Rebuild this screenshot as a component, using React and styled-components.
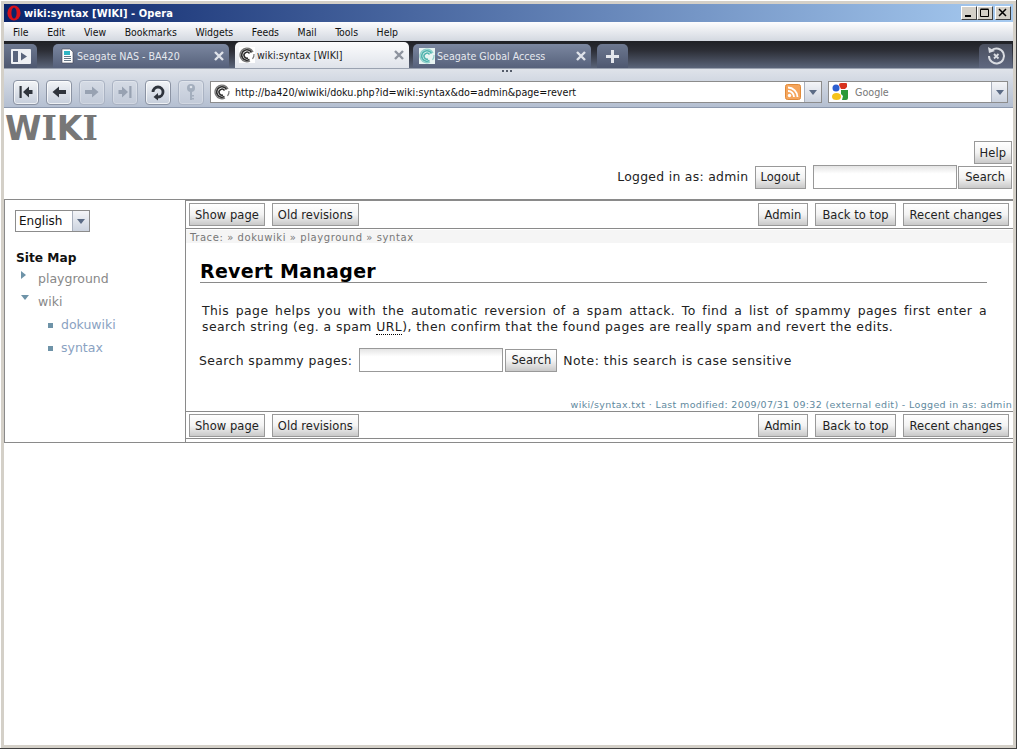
import styled, { createGlobalStyle } from "styled-components"

const Global = createGlobalStyle`
  html, body { margin: 0; padding: 0; background: #fff; }
  * { box-sizing: border-box; }
`

const ui = `"DejaVu Sans", Verdana, sans-serif`

const Window = styled.div`
  width: 1017px;
  height: 749px;
  padding: 4px;
  background: #d4d0c8;
  box-shadow: inset -1px -1px 0 #404040, inset 1px 1px 0 #fff;
  display: flex;
  flex-direction: column;
  overflow: hidden;
`

const TitleBar = styled.div`
  height: 18px;
  flex: none;
  display: flex;
  align-items: center;
  padding: 0 2px 0 3px;
  background: linear-gradient(to right, #0a246a, #a6caf0);
  color: #fff;
  font: bold 11px ${ui};
  font-stretch: condensed;
  letter-spacing: 0.08px;
`

const TitleText = styled.span`
  margin-left: 3px;
  flex: 1;
`

const WinButton = styled.button`
  width: 16px;
  height: 14px;
  padding: 0;
  margin-left: ${p => (p.$gap ? 2 : 0)}px;
  background: #d4d0c8;
  border: 1px solid;
  border-color: #fff #404040 #404040 #fff;
  display: flex;
  align-items: center;
  justify-content: center;
`

const MenuBar = styled.div`
  height: 19px;
  flex: none;
  display: flex;
  align-items: center;
  padding-left: 9px;
  gap: 18.6px;
  background: linear-gradient(to bottom, #fdfdfe, #d3d8e0);
  color: #111;
  font: 10.4px ${ui};
  font-stretch: condensed;
`

const TabBar = styled.div`
  height: 27px;
  flex: none;
  display: flex;
  align-items: flex-end;
  padding-right: 1px;
  background: linear-gradient(to bottom, #1f2025 0%, #2c2e36 35%, #5a6479 100%);
  font: 10.6px ${ui};
  font-stretch: condensed;
`

const SidePanelToggle = styled.div`
  width: 33px;
  height: 24px;
  margin-right: 16px;
  background: linear-gradient(to bottom, #6d7890, #4e5870);
  border-radius: 0 5px 0 0;
  display: flex;
  align-items: center;
  justify-content: center;
`

const Tab = styled.div`
  width: ${p => p.$w}px;
  height: ${p => (p.$active ? 26 : 24)}px;
  margin-right: ${p => p.$mr}px;
  display: flex;
  align-items: center;
  gap: 2px;
  padding: 0 5px 0 ${p => (p.$active ? 4 : 6)}px;
  border-radius: 5px 5px 0 0;
  color: ${p => (p.$active ? "#222" : "#e6e9ef")};
  background: ${p =>
    p.$active
      ? "linear-gradient(to bottom, #fcfcfd, #dfe3ea)"
      : "linear-gradient(to bottom, #7b87a0, #56617b)"};
`

const TabLabel = styled.span`
  flex: 1;
  white-space: nowrap;
`

const NewTab = styled.div`
  width: 31px;
  height: 24px;
  background: linear-gradient(to bottom, #6d7890, #4e5870);
  border-radius: 5px 5px 0 0;
  display: flex;
  align-items: center;
  justify-content: center;
`

const ClosedTabs = styled.div`
  width: 33px;
  height: 24px;
  margin-left: auto;
  background: linear-gradient(to bottom, #4a4f5e, #5f6880);
  border-radius: 5px 0 0 0;
  display: flex;
  align-items: center;
  justify-content: center;
`

const NavBar = styled.div`
  height: 40px;
  flex: none;
  position: relative;
  display: flex;
  align-items: center;
  padding: 8px 5px 0 9px;
  background: linear-gradient(to bottom, #dfe3ea, #b4bfd1);
  border-bottom: 1px solid #8d99ae;
  border-top: 1px solid #9aa2b0;
`

const GripDots = styled.div`
  position: absolute;
  top: 1px;
  left: 498px;
  display: flex;
  gap: 2px;
  & > i {
    width: 2px;
    height: 2px;
    background: #555c6a;
  }
`

const NavButton = styled.div`
  width: 26px;
  height: 25px;
  margin-right: 7px;
  border: 1px solid ${p => (p.$off ? "#aab3c3" : "#8b93a3")};
  border-radius: 4px;
  background: ${p =>
    p.$off
      ? "linear-gradient(to bottom, #d5dbe5, #c2cad8)"
      : "linear-gradient(to bottom, #f2f4f7, #c6cedb)"};
  box-shadow: inset 0 0 0 1px rgba(255, 255, 255, ${p => (p.$off ? 0.25 : 0.7)});
  display: flex;
  align-items: center;
  justify-content: center;
`

const AddressBox = styled.div`
  width: 612px;
  height: 22px;
  margin-left: -1px;
  display: flex;
  align-items: center;
  padding-left: 3px;
  background: #fff;
  border: 1px solid #8c8c8c;
  font: 10.65px ${ui};
  font-stretch: condensed;
  color: #111;
`

const AddressText = styled.span`
  flex: 1;
  margin-left: 5px;
  white-space: nowrap;
`

const DropArrow = styled.div`
  width: ${p => p.$w || 17}px;
  align-self: stretch;
  background: linear-gradient(to bottom, #f4f5f8, #ccd3df);
  border-left: 1px solid #a9b0bd;
  display: flex;
  align-items: center;
  justify-content: center;
  flex: none;
  margin-left: 3px;
  &::after {
    content: "";
    border: 4px solid transparent;
    border-top: 5px solid #5b6b85;
    border-bottom: 0;
  }
`

const SearchBox = styled(AddressBox)`
  width: 180px;
  margin-left: 6px;
  color: #777;
`

const SearchLabel = styled.span`
  flex: 1;
  margin-left: 6px;
`

const Page = styled.div`
  flex: 1;
  min-height: 0;
  background: #fff;
  font: 12.4px ${ui};
  color: #222;
  letter-spacing: 0.3px;
`

const Masthead = styled.header`
  height: 91px;
  display: flex;
  flex-direction: column;
  align-items: stretch;
`

const Logo = styled.h1`
  margin: 3px 0 0 1px;
  height: 30px;
  font: bold 33px/35px ${ui};
  letter-spacing: 0;
  color: #777;
`

const SerifLetter = styled.span`
  font-family: "DejaVu Serif", serif;
`

const HelpRow = styled.div`
  display: flex;
  justify-content: flex-end;
  padding-right: 1px;
`

const UserRow = styled.div`
  display: flex;
  justify-content: flex-end;
  align-items: center;
  padding-right: 1px;
  margin-top: 1px;
`

const UserText = styled.span`
  margin: -2px 6px 0 0;
`

const Button = styled.button`
  height: 23px;
  padding: 0 ${p => (p.$wide ? 6 : 5)}px;
  margin-left: ${p => p.$ml || 0}px;
  border: 1px solid #999;
  background: linear-gradient(to bottom, #fff 0%, #f3f3f3 50%, #c9c9c9 100%);
  color: #222;
  font: 11.5px ${ui};
  letter-spacing: 0.05px;
  white-space: nowrap;
`

const TextInput = styled.input`
  width: 144px;
  height: 24px;
  margin-left: ${p => p.$ml || 0}px;
  padding: 0;
  border: 1px solid #999;
  background: linear-gradient(to bottom, #e4e4e4, #fff 35%);
`

const Frame = styled.div`
  height: 244px;
  display: flex;
  border-top: 1px solid #8a8a8a;
  border-bottom: 1px solid #8a8a8a;
  border-left: 1px solid #8a8a8a;
`

const Sidebar = styled.aside`
  width: 181px;
  flex: none;
  padding: 10px 10px 0 10px;
  border-right: 1px solid #8a8a8a;
`

const LangSelect = styled.div`
  width: 75px;
  height: 22px;
  display: flex;
  align-items: center;
  padding-left: 3px;
  border: 1px solid #8c8c8c;
  color: #111;
  font-size: 12px;
  letter-spacing: 0;
`

const LangLabel = styled.span`
  flex: 1;
`

const SiteMapTitle = styled.h2`
  margin: 18px 0 0 1px;
  font: bold 12.2px/16px ${ui};
  letter-spacing: 0;
  color: #111;
`

const Tree = styled.ul`
  list-style: none;
  margin: 0;
  padding: 0 0 0 ${p => p.$indent}px;
`

const TreeItem = styled.li`
  height: ${p => p.$h}px;
  padding-top: ${p => p.$top || 0}px;
  display: flex;
  align-items: center;
  gap: ${p => p.$gap}px;
  color: ${p => (p.$leaf ? "#8aa2c2" : "#888")};
  letter-spacing: 0;
  font-size: 12.5px;
`

const Marker = styled.i`
  width: 5px;
  height: 5px;
  flex: none;
  ${p => p.$kind === "leaf" && "background: #6e93a8; margin-top: 2px;"}
  ${p =>
    p.$kind === "closed" &&
    "width: 0; height: 0; border: 4px solid transparent; border-left: 5px solid #6e93a8; border-right: 0; margin-top: -7px;"}
  ${p =>
    p.$kind === "open" &&
    "width: 0; height: 0; border: 4px solid transparent; border-top: 5px solid #6e93a8; border-bottom: 0; margin-top: -7px;"}
`

const Main = styled.main`
  flex: 1;
  min-width: 0;
  border-top: 1px solid #8a8a8a;
  display: flex;
  flex-direction: column;
`

const ActionBar = styled.div`
  height: ${p => p.$h}px;
  flex: none;
  display: flex;
  align-items: center;
  gap: 7px;
  padding: 1px 4px 0 3px;
`

const Spacer = styled.div`
  flex: 1;
`

const Trace = styled.div`
  height: 15px;
  margin-top: 1px;
  padding-left: 4px;
  border-top: 1px solid #8a8a8a;
  font: 10px/17px ${ui};
  letter-spacing: 0.58px;
  color: #777;
  background: linear-gradient(to bottom, #fff 0 1px, #f5f5f5 1px);
`

const Content = styled.div`
  flex: 1;
  padding: 16px 26px 0 14px;
  letter-spacing: 0.4px;
`

const Heading = styled.h1`
  margin: 0;
  height: 24px;
  font: bold 19px/24px ${ui};
  letter-spacing: 0.3px;
  color: #000;
  border-bottom: 1px solid #8a8a8a;
`

const Paragraph = styled.p`
  margin: 20px 0 0 2px;
  line-height: 16px;
  text-align: justify;
  letter-spacing: 0.46px;
`

const Abbr = styled.abbr`
  text-decoration: none;
  border-bottom: 1px dotted #000;
`

const SearchForm = styled.div`
  display: flex;
  align-items: center;
  margin: 13px 0 0 -1px;
`

const SearchNote = styled.span`
  margin-left: 6px;
  letter-spacing: 0.52px;
`

const Meta = styled.div`
  text-align: right;
  padding-right: 1px;
  font: 9.5px/13px ${ui};
  letter-spacing: 0.35px;
  color: #5f8aa0;
  border-bottom: 1px solid #8a8a8a;
`

const BottomRule = styled.div`
  flex: none;
  height: 4px;
  border-top: 1px solid #8a8a8a;
`

// Site favicon: a dark broken ring around a smaller swirl
function DokuIcon({ tint = "#2b2b2b", soft = "#777", bg = "#fff" }) {
  return (
    <svg width="16" height="16" viewBox="0 0 16 16">
      <rect width="16" height="16" fill={bg} />
      <g fill="none">
        <path d="M14 5A6.800 6.800 0 1 0 11 14" stroke={soft} strokeWidth="1.400" />
        <path d="M12.500 5.500A5.200 5.200 0 1 0 10.500 12.500" stroke={tint} strokeWidth="1.600" />
        <path d="M10.500 6.500A3 3 0 1 0 9 11" stroke={tint} strokeWidth="1.500" />
        <path d="M15 7A7 7 0 0 1 13.500 12" stroke={soft} strokeWidth="1.200" />
      </g>
    </svg>
  )
}

function CloseX({ color }) {
  return (
    <svg width="10" height="10" viewBox="0 0 10 10">
      <path d="M1 1l8 8M9 1l-8 8" stroke={color} strokeWidth="2.400" fill="none" />
    </svg>
  )
}

function NavIcon({ d, fill }) {
  return (
    <svg width="18" height="16" viewBox="0 0 18 16">
      <path d={d} fill={fill} />
    </svg>
  )
}

const navDark = "#2f343c"
const navOff = "#98a2b2"

function ActionButtons({ h }) {
  return (
    <ActionBar $h={h}>
      <Button>Show page</Button>
      <Button>Old revisions</Button>
      <Spacer />
      <Button $wide>Admin</Button>
      <Button $wide>Back to top</Button>
      <Button $wide>Recent changes</Button>
    </ActionBar>
  )
}

export default function App() {
  const menus = ["File", "Edit", "View", "Bookmarks", "Widgets", "Feeds", "Mail", "Tools", "Help"]

  return (
    <Window>
      <Global />
      <TitleBar>
        <svg width="14" height="16" viewBox="0 0 14 16">
          <ellipse cx="7" cy="8" rx="6.600" ry="7.600" fill="#d8121a" />
          <ellipse cx="7" cy="8" rx="2.600" ry="5.600" fill="#0a246a" />
        </svg>
        <TitleText>wiki:syntax [WIKI] - Opera</TitleText>
        <WinButton>
          <svg width="10" height="10" viewBox="0 0 10 10"><rect x="1" y="7" width="6" height="2" fill="#000" /></svg>
        </WinButton>
        <WinButton>
          <svg width="10" height="10" viewBox="0 0 10 10"><path d="M0.500 1.500h8v7h-8z M0.500 1h8" fill="none" stroke="#000" /></svg>
        </WinButton>
        <WinButton $gap>
          <svg width="10" height="10" viewBox="0 0 10 10"><path d="M1 1l7 7M8 1l-7 7" stroke="#000" strokeWidth="1.500" /></svg>
        </WinButton>
      </TitleBar>

      <MenuBar>
        {menus.map(m => <span key={m}>{m}</span>)}
      </MenuBar>

      <TabBar>
        <SidePanelToggle>
          <svg width="20" height="15" viewBox="0 0 20 15">
            <rect width="20" height="15" rx="1" fill="#eef0f4" />
            <rect x="2" y="2" width="5" height="11" fill="#59647c" />
            <path d="M10 3.500l6 4-6 4z" fill="#59647c" />
          </svg>
        </SidePanelToggle>
        <Tab $w={176} $mr={6}>
          <svg width="16" height="16" viewBox="0 0 16 16">
            <path d="M3 1h8l3 3v11H3z" fill="#fff" stroke="#445" strokeWidth="0.600" />
            <rect x="5" y="3" width="6" height="4" fill="#31b5c4" />
            <rect x="5" y="8" width="7" height="1" fill="#678" />
            <rect x="5" y="10" width="7" height="1" fill="#678" />
            <rect x="5" y="12" width="7" height="1" fill="#678" />
          </svg>
          <TabLabel>Seagate NAS - BA420</TabLabel>
          <CloseX color="#dfe3ea" />
        </Tab>
        <Tab $w={174} $mr={4} $active>
          <DokuIcon />
          <TabLabel>wiki:syntax [WIKI]</TabLabel>
          <CloseX color="#8d939e" />
        </Tab>
        <Tab $w={178} $mr={6}>
          <DokuIcon tint="#4fb3ad" soft="#8fd0cb" bg="#e8f4f2" />
          <TabLabel>Seagate Global Access</TabLabel>
          <CloseX color="#dfe3ea" />
        </Tab>
        <NewTab>
          <svg width="13" height="13" viewBox="0 0 13 13">
            <path d="M5 0h3v5h5v3H8v5H5V8H0V5h5z" fill="#e3e6ec" />
          </svg>
        </NewTab>
        <ClosedTabs>
          <svg width="20" height="20" viewBox="0 0 20 20" fill="none" stroke="#d9dce2">
            <path d="M6 4a7.500 7.500 0 1 1-3 6" strokeWidth="2" />
            <path d="M2 1l1 6 6-2z" fill="#d9dce2" stroke="none" />
            <path d="M8 8l4.500 4.500M12.500 8L8 12.500" strokeWidth="1.800" />
          </svg>
        </ClosedTabs>
      </TabBar>

      <NavBar>
        <GripDots><i /><i /><i /></GripDots>
        <NavButton>
          <NavIcon fill={navDark} d="M2.500 2h2.200v12H2.500zM6 8l6-5.500V6h3.500v4H12v3.500z" />
        </NavButton>
        <NavButton>
          <NavIcon fill={navDark} d="M2.500 8l6.500-5.500V6h7v4H9v3.500z" />
        </NavButton>
        <NavButton $off>
          <NavIcon fill={navOff} d="M15.500 8L9 2.500V6H2v4h7v3.500z" />
        </NavButton>
        <NavButton $off>
          <NavIcon fill={navOff} d="M15.500 2h-2.200v12h2.200zM12 8L6 2.500V6H2.500v4H6v3.500z" />
        </NavButton>
        <NavButton>
          <svg width="18" height="18" viewBox="0 0 18 18" fill="none">
            <path d="M4 9a5 5 0 1 1 5 5" stroke={navDark} strokeWidth="2.800" />
            <path d="M9 10v7.500L4.500 14z" fill={navDark} />
          </svg>
        </NavButton>
        <NavButton $off>
          <svg width="12" height="18" viewBox="0 0 12 18">
            <circle cx="6" cy="5" r="4" fill="#a3aebd" />
            <circle cx="6" cy="4" r="1.300" fill="#dde2ea" />
            <path d="M5 8h2v9H5zM7 12h2v1.500H7zM7 15h2v1.500H7z" fill="#a3aebd" />
          </svg>
        </NavButton>
        <AddressBox>
          <DokuIcon />
          <AddressText>http://ba420/wiwiki/doku.php?id=wiki:syntax&amp;do=admin&amp;page=revert</AddressText>
          <svg width="16" height="16" viewBox="0 0 16 16">
            <rect x="0.500" y="0.500" width="15" height="15" rx="2" fill="#f5a55c" stroke="#e08a3a" />
            <circle cx="4.500" cy="11.500" r="1.700" fill="#fff" />
            <path d="M3 7a6 6 0 0 1 6 6M3 3.500a9.500 9.500 0 0 1 9.500 9.500" stroke="#fff" strokeWidth="1.800" fill="none" />
          </svg>
          <DropArrow />
        </AddressBox>
        <SearchBox>
          <svg width="17" height="18" viewBox="0 0 17 18">
            <circle cx="4" cy="5" r="3.500" fill="#2d5fd0" />
            <path d="M7 2a2 2 0 0 1 2-2h5a1 1 0 0 1 1 1v3l-2 2H9z" fill="#d8321e" />
            <ellipse cx="4.500" cy="13.500" rx="4.500" ry="3.500" fill="#f5c31a" />
            <path d="M9 7h7v8a2 2 0 0 1-2 2H10l1-4-2-2z" fill="#2a9a3a" />
          </svg>
          <SearchLabel>Google</SearchLabel>
          <DropArrow $w={16} />
        </SearchBox>
      </NavBar>

      <Page>
        <Masthead>
          <Logo>W<SerifLetter>I</SerifLetter>K<SerifLetter>I</SerifLetter></Logo>
          <HelpRow><Button>Help</Button></HelpRow>
          <UserRow>
            <UserText>Logged in as: admin</UserText>
            <Button>Logout</Button>
            <TextInput $ml={7} />
            <Button $wide $ml={1}>Search</Button>
          </UserRow>
        </Masthead>

        <Frame>
          <Sidebar>
            <LangSelect>
              <LangLabel>English</LangLabel>
              <DropArrow />
            </LangSelect>
            <SiteMapTitle>Site Map</SiteMapTitle>
            <Tree $indent={6}>
              <TreeItem $h={24} $gap={12}><Marker $kind="closed" />playground</TreeItem>
              <TreeItem $h={22} $gap={9}><Marker $kind="open" />wiki</TreeItem>
            </Tree>
            <Tree $indent={33}>
              <TreeItem $h={24} $top={1} $gap={8} $leaf><Marker $kind="leaf" />dokuwiki</TreeItem>
              <TreeItem $h={23} $gap={8} $leaf><Marker $kind="leaf" />syntax</TreeItem>
            </Tree>
          </Sidebar>

          <Main>
            <ActionButtons h={26} />
            <Trace>Trace: » dokuwiki » playground » syntax</Trace>
            <Content>
              <Heading>Revert Manager</Heading>
              <Paragraph>
                This page helps you with the automatic reversion of a spam attack. To find a list of spammy
                pages first enter a search string (eg. a spam <Abbr>URL</Abbr>), then confirm that the found
                pages are really spam and revert the edits.
              </Paragraph>
              <SearchForm>
                <span>Search spammy pages:</span>
                <TextInput $ml={7} />
                <Button $ml={2}>Search</Button>
                <SearchNote>Note: this search is case sensitive</SearchNote>
              </SearchForm>
            </Content>
            <Meta>wiki/syntax.txt · Last modified: 2009/07/31 09:32 (external edit) - Logged in as: admin</Meta>
            <ActionButtons h={26} />
            <BottomRule />
          </Main>
        </Frame>
      </Page>
    </Window>
  )
}
